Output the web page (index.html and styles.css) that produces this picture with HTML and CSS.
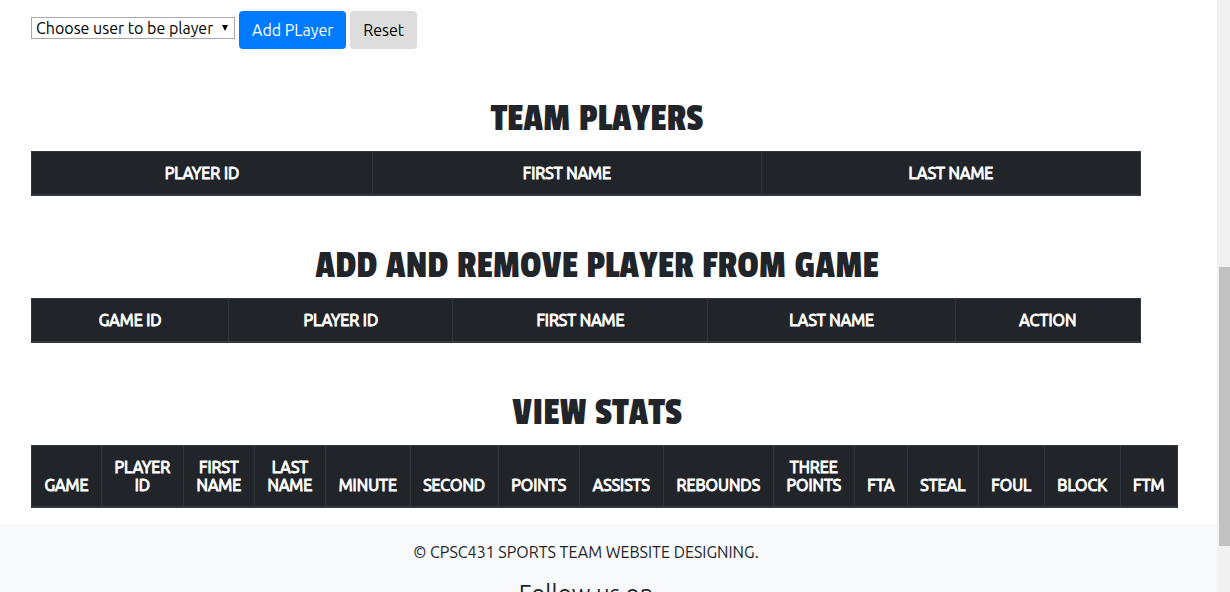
FILE: index.html
```
<!DOCTYPE html>
<html lang="en">
<head>
<meta charset="utf-8">
<title>Sports Team</title>
<link rel="stylesheet" href="styles.css">
</head>
<body>
<div class="page">
  <main class="content">
    <form class="player-form">
      <span class="picker">
        <select class="picker-select" aria-label="Choose user to be player">
          <option>Choose user to be player</option>
        </select>
        <svg class="picker-arrow" viewBox="0 0 6 6" aria-hidden="true"><path d="M0 0h6L3 6z"/></svg>
      </span>
      <button class="btn btn-primary" type="button">Add PLayer</button>
      <button class="btn btn-reset" type="reset">Reset</button>
    </form>

    <h2 class="title">TEAM PLAYERS</h2>
    <table class="table">
      <colgroup><col style="width:30.75%"><col style="width:35.05%"><col style="width:34.2%"></colgroup>
      <thead><tr><th>PLAYER ID</th><th>FIRST NAME</th><th>LAST NAME</th></tr></thead>
    </table>

    <h2 class="title">ADD AND REMOVE PLAYER FROM GAME</h2>
    <table class="table">
      <colgroup><col style="width:17.8%"><col style="width:20.2%"><col style="width:23%"><col style="width:22.3%"><col style="width:16.7%"></colgroup>
      <thead><tr><th>GAME ID</th><th>PLAYER ID</th><th>FIRST NAME</th><th>LAST NAME</th><th>ACTION</th></tr></thead>
    </table>

    <h2 class="title">VIEW STATS</h2>
    <table class="table table-wide">
      <colgroup>
        <col style="width:6.1%"><col style="width:7.15%"><col style="width:6.2%"><col style="width:6.2%"><col style="width:7.4%">
        <col style="width:7.67%"><col style="width:7.08%"><col style="width:7.33%"><col style="width:9.6%"><col style="width:7.08%">
        <col style="width:4.62%"><col style="width:6.2%"><col style="width:5.75%"><col style="width:6.62%"><col style="width:5%">
      </colgroup>
      <thead><tr>
        <th>GAME</th><th>PLAYER<br>ID</th><th>FIRST<br>NAME</th><th>LAST<br>NAME</th><th>MINUTE</th>
        <th>SECOND</th><th>POINTS</th><th>ASSISTS</th><th>REBOUNDS</th><th>THREE<br>POINTS</th>
        <th>FTA</th><th>STEAL</th><th>FOUL</th><th>BLOCK</th><th>FTM</th>
      </tr></thead>
    </table>
  </main>
  <footer class="footer">
    <p class="copyright">© CPSC431 SPORTS TEAM WEBSITE DESIGNING.</p>
    <h4 class="follow">Follow us on</h4>
  </footer>
</div>
<div class="scrollbar" aria-hidden="true"><div class="scrollbar-thumb"></div></div>
</body>
</html>
```
FILE: styles.css
```
* { box-sizing: border-box; }

body {
  margin: 0;
  height: 100vh;
  display: flex;
  overflow: hidden;
  background: #fff;
  color: #212529;
  font: 16px/24px Ubuntu, "Open Sans", "Noto Sans", sans-serif;
}

.page {
  flex: 1;
  min-width: 0;
  overflow: hidden;
}

.content { padding: 11px 39px 16px 31px; }

.player-form {
  display: flex;
  gap: 4px;
}

.picker {
  position: relative;
  align-self: flex-start;
  margin-top: 6px;
}

.picker-select {
  display: block;
  width: 204px;
  height: 22px;
  padding: 0 0 0 4px;
  appearance: none;
  border: 1px solid #a9a9a9;
  border-radius: 0;
  background: #fff;
  color: #000;
  font: 16px/20px Ubuntu, "Open Sans", "Noto Sans", sans-serif;
}

.picker-arrow {
  position: absolute;
  right: 7px;
  top: 8px;
  width: 6px;
  height: 6px;
  pointer-events: none;
}

.btn {
  height: 38px;
  padding: 0 13px;
  border: 0;
  border-radius: 4px;
  font: 16px/24px Ubuntu, "Open Sans", "Noto Sans", sans-serif;
}

.btn-primary { background: #007bff; color: #fff; }
.btn-reset { background: #ddd; color: #000; }

.title {
  margin: 46px 15px 8px 0;
  font: 400 40px/48px "Passion One", "Roboto Condensed", sans-serif;
  text-align: center;
}

.table {
  width: calc(100% - 37px);
  table-layout: fixed;
  border-collapse: separate;
  border-spacing: 0;
  border-left: 1px solid #32383e;
  background: #212529;
  color: #fff;
}

.table-wide { width: 100%; }

.table th {
  padding: 12px 0;
  border: 1px solid #32383e;
  border-width: 1px 1px 2px 0;
  font: 400 16px/18px Ubuntu, "Open Sans", sans-serif;
  -webkit-text-stroke: 1px;
  text-align: center;
  vertical-align: bottom;
}

.footer {
  padding: 16px 45px 16px 0;
  background: #f8f9fa;
  text-align: center;
}

.copyright { margin: 0 0 16px; }

.follow {
  margin: 0;
  font-size: 24px;
  line-height: 28px;
  font-weight: 400;
}

.scrollbar {
  flex: 0 0 13px;
  padding: 267px 0 0 2px;
  background: #f1f1f1;
}

.scrollbar-thumb { height: 279px; background: #c1c1c1; }
```
